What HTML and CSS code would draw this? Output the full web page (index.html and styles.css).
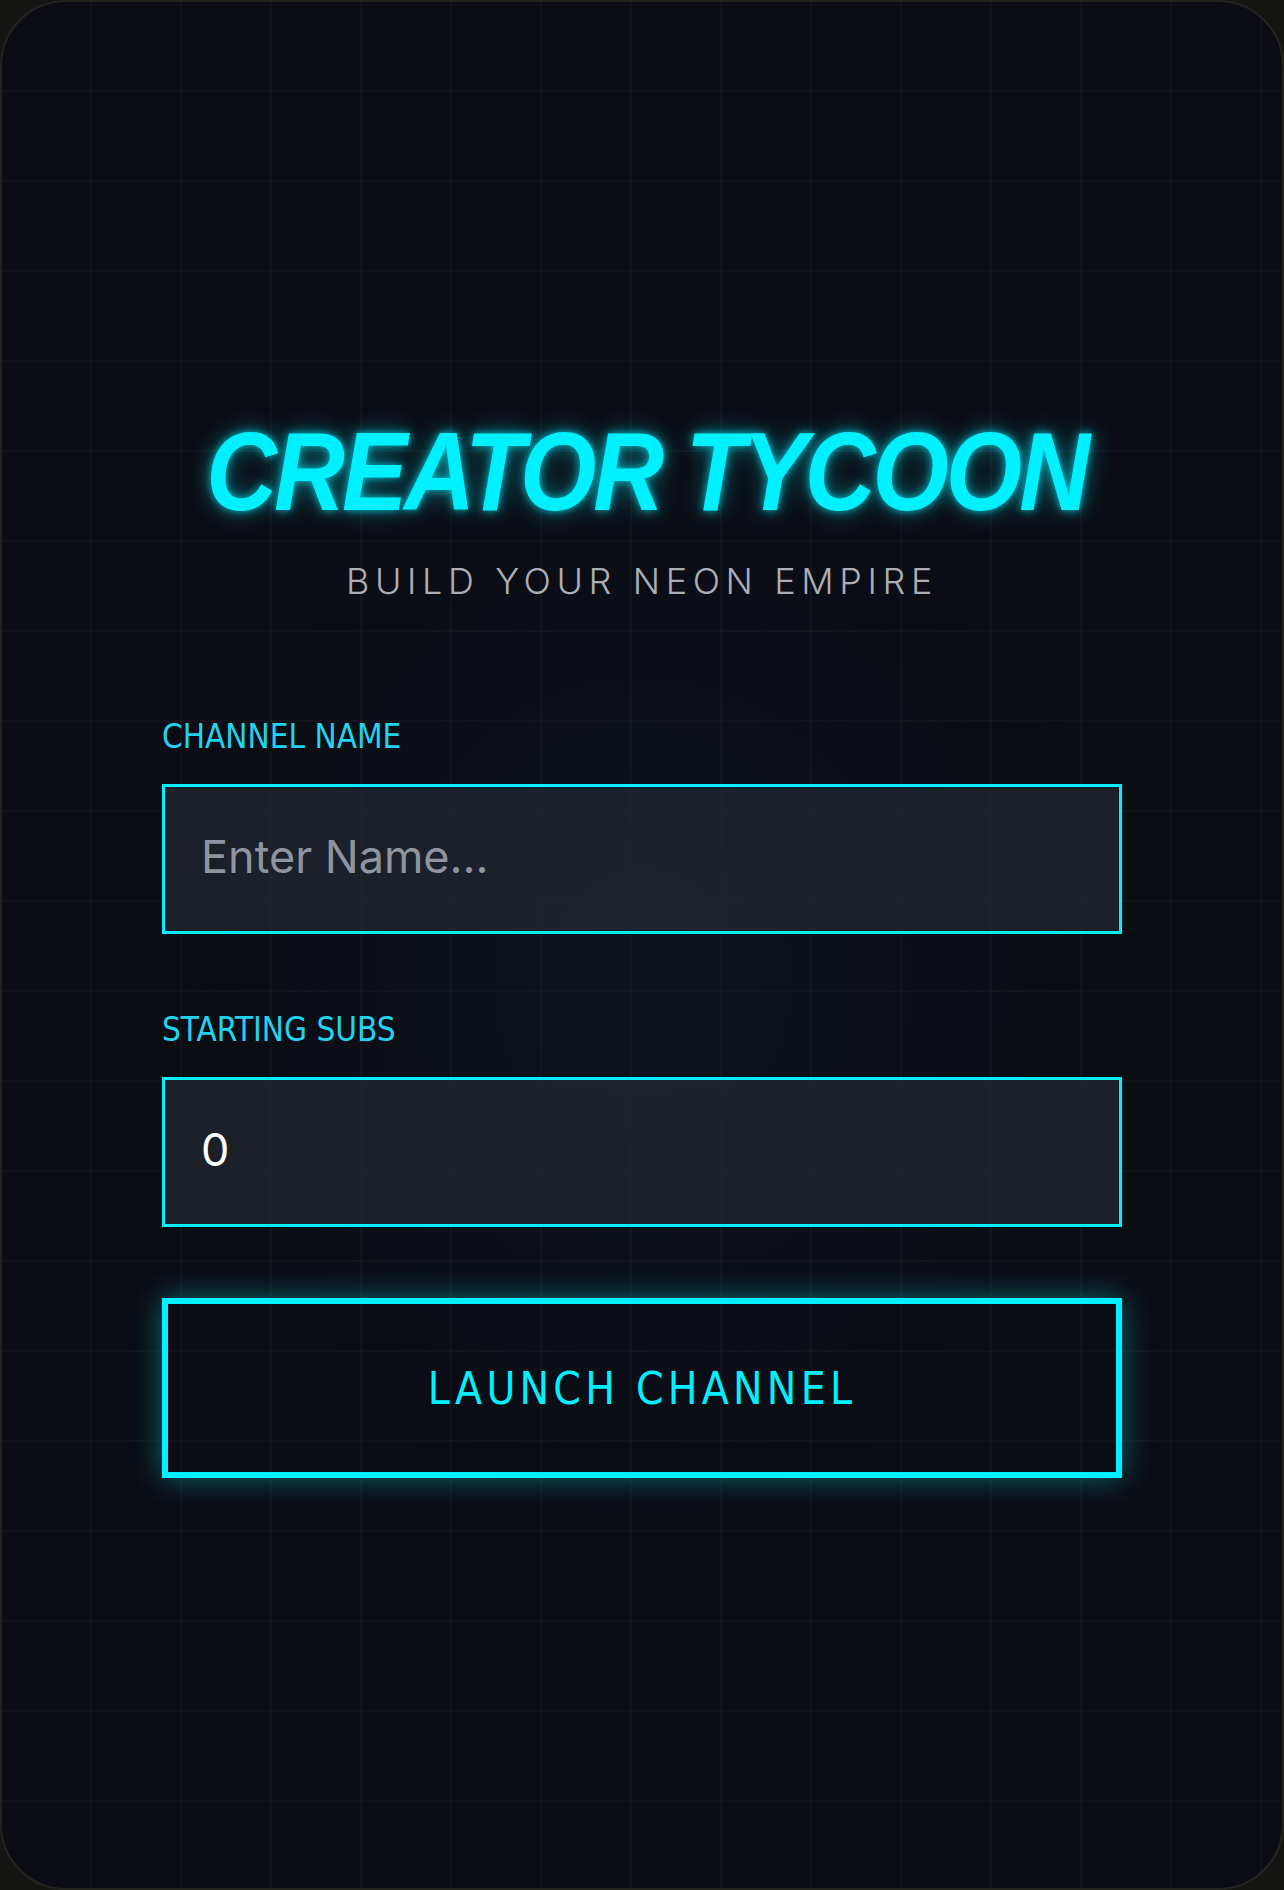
FILE: index.html
```html
<!DOCTYPE html>
<html lang="en">
<head>
<meta charset="utf-8">
<title>Creator Tycoon</title>
<link rel="stylesheet" href="styles.css">
</head>
<body>
<div class="screen">
  <main class="panel">
    <h1 class="title"><span class="title-text">CREATOR TYCOON</span></h1>
    <p class="tagline">BUILD YOUR NEON EMPIRE</p>
    <form class="form">
      <div class="field">
        <label class="field-label" for="name">CHANNEL NAME</label>
        <input id="name" class="field-input" type="text" placeholder="Enter Name...">
      </div>
      <div class="field">
        <label class="field-label" for="subs">STARTING SUBS</label>
        <input id="subs" class="field-input" type="text" value="0">
      </div>
      <button class="launch" type="button">LAUNCH CHANNEL</button>
    </form>
  </main>
</div>
</body>
</html>
```

FILE: styles.css
```css
* { box-sizing: border-box; }

html, body {
  margin: 0;
  padding: 0;
  background: #141412;
}

.screen {
  width: 1284px;
  height: 1890px;
  border: 2px solid #24241f;
  border-radius: 66px;
  overflow: hidden;
  display: flex;
  align-items: center;
  justify-content: center;
  background-color: #0b0c14;
  background-image:
    radial-gradient(ellipse 700px 800px at 50% 52%, rgba(20, 45, 60, 0.22), rgba(20, 45, 60, 0) 70%),
    linear-gradient(to right, rgba(255, 255, 255, 0.028) 2px, transparent 2px),
    linear-gradient(to bottom, rgba(255, 255, 255, 0.028) 2px, transparent 2px);
  background-size: 100% 100%, 90px 90px, 90px 90px;
  background-position: 0 0, -2px -2px, -2px -2px;
}

.panel {
  width: 960px;
  display: flex;
  flex-direction: column;
  align-items: stretch;
}

.title {
  margin: 0;
  font-family: "Liberation Sans", Arial, sans-serif;
  font-weight: 700;
  font-style: italic;
  font-size: 111px;
  line-height: 120px;
  text-align: left;
  color: #00f0ff;
  white-space: nowrap;
}

.title-text {
  display: inline-block;
  margin-left: -13px;
  letter-spacing: -3.5px;
  transform: scaleX(0.885);
  text-shadow: 0 0 9px rgba(0, 240, 255, 0.75), 0 0 26px rgba(0, 240, 255, 0.45);
}

.tagline {
  margin: 25px 0 0;
  font-family: Inter, "Liberation Sans", sans-serif;
  font-weight: 300;
  font-size: 36px;
  line-height: 48px;
  letter-spacing: 5.6px;
  text-align: center;
  color: #abaeb5;
}

.form {
  margin-top: 108px;
  display: flex;
  flex-direction: column;
}

.field {
  display: flex;
  flex-direction: column;
  margin-bottom: 72px;
}

.field-label {
  font-family: "DejaVu Sans Condensed", "Liberation Sans", sans-serif;
  font-stretch: condensed;
  font-size: 33px;
  line-height: 48px;
  color: #22d3ee;
  margin-bottom: 23px;
}

.field-input {
  display: block;
  width: 100%;
  height: 150px;
  margin: 0;
  padding: 33px 36px 39px;
  border: 3px solid #00f0ff;
  border-radius: 0;
  outline: none;
  background: rgba(32, 38, 48, 0.78);
  font-family: Inter, "Liberation Sans", sans-serif;
  font-size: 45px;
  line-height: 72px;
  color: #ffffff;
}

.field-input::placeholder {
  color: #8f949f;
  opacity: 1;
}

.launch {
  display: block;
  width: 100%;
  height: 180px;
  margin: -1px 0 0;
  padding: 0;
  border: 6px solid #00f0ff;
  border-radius: 0;
  background: transparent;
  box-shadow: 0 0 28px rgba(0, 240, 255, 0.4);
  font-family: "DejaVu Sans Condensed", "Liberation Sans", sans-serif;
  font-stretch: condensed;
  font-size: 44px;
  letter-spacing: 4.2px;
  color: #00f0ff;
  cursor: pointer;
}
```
